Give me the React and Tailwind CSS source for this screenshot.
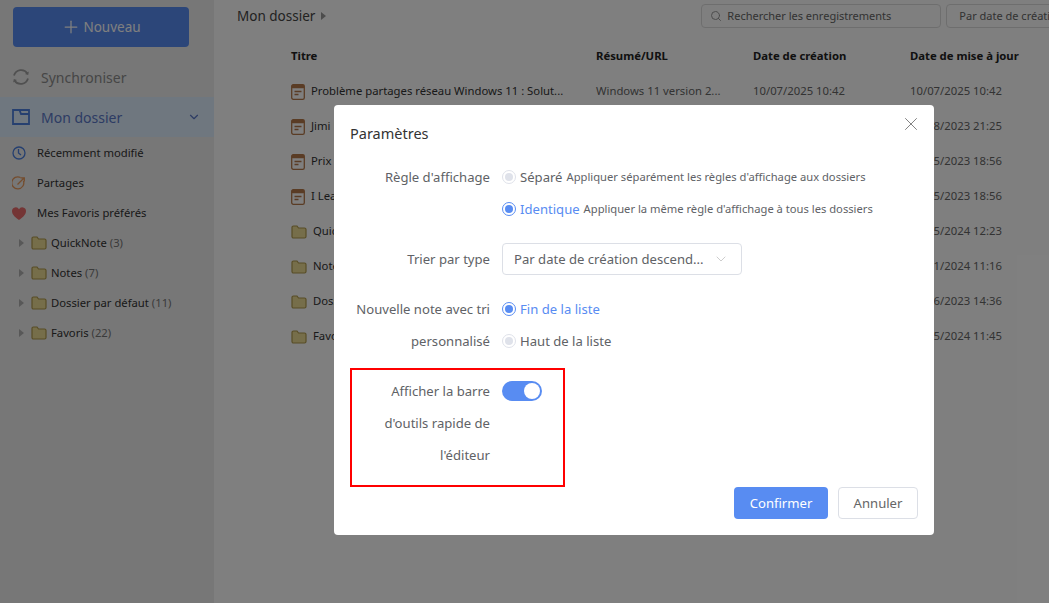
import React from "react";
import { Plus, ChevronDown, Search, X } from "lucide-react";

const rows = [
  { title: "Problème partages réseau Windows 11 : Solut...", summary: "Windows 11 version 2...", created: "10/07/2025 10:42", updated: "10/07/2025 10:42", type: "note" },
  { title: "Jimi Hendrix", summary: "", created: "12/08/2023 21:25", updated: "12/08/2023 21:25", type: "note" },
  { title: "Prix du matériel", summary: "", created: "15/05/2023 18:56", updated: "15/05/2023 18:56", type: "note" },
  { title: "I Learned", summary: "", created: "15/05/2023 18:56", updated: "15/05/2023 18:56", type: "note" },
  { title: "QuickNote", summary: "", created: "15/05/2024 12:23", updated: "15/05/2024 12:23", type: "folder" },
  { title: "Notes", summary: "", created: "11/01/2024 11:16", updated: "11/01/2024 11:16", type: "folder" },
  { title: "Dossier par défaut", summary: "", created: "16/06/2023 14:36", updated: "16/06/2023 14:36", type: "folder" },
  { title: "Favoris", summary: "", created: "15/05/2024 11:45", updated: "15/05/2024 11:45", type: "folder" },
];

const folders = [
  { name: "QuickNote", count: 3 },
  { name: "Notes", count: 7 },
  { name: "Dossier par défaut", count: 11 },
  { name: "Favoris", count: 22 },
];

function FolderIcon() {
  return (
    <svg width="16" height="14" viewBox="0 0 16 14" className="shrink-0">
      <path d="M1 2.500C1 1.600 1.600 1 2.500 1H6l1.500 2h6C14.400 3 15 3.600 15 4.500v7c0 .9-.6 1.500-1.500 1.500h-11C1.600 13 1 12.400 1 11.500Z" fill="#eddc95" stroke="#b09a4c" strokeWidth="1.2" />
    </svg>
  );
}

function NoteIcon() {
  return (
    <svg width="14" height="16" viewBox="0 0 14 16" className="shrink-0">
      <rect x="0.7" y="0.7" width="12.6" height="14.6" rx="1.6" fill="none" stroke="#b5794a" strokeWidth="1.3" />
      <rect x="0.7" y="0.7" width="12.6" height="3.6" rx="1" fill="#b5794a" />
      <path d="M3.500 7.500h7M3.500 10.500h4" stroke="#b5794a" strokeWidth="1.3" />
    </svg>
  );
}

function Caret({ className }) {
  return (
    <svg width="5" height="8" viewBox="0 0 5 8" className={className}>
      <path d="M0 0l5 4-5 4Z" fill="currentColor" />
    </svg>
  );
}

function Radio({ on }) {
  return (
    <span className={`flex h-[14px] w-[14px] shrink-0 items-center justify-center rounded-full border bg-white ${on ? "border-[#588cf2]" : "border-[#dfe2ea]"}`}>
      <span className={`h-2 w-2 rounded-full ${on ? "bg-[#588cf2]" : "bg-[#dfe2ea]"}`} />
    </span>
  );
}

function Sidebar() {
  return (
    <aside className="flex w-[214px] shrink-0 flex-col bg-[#eeeeee]">
      <div className="px-[13px] pt-[7px]">
        <div className="flex h-10 w-[176px] items-center justify-center gap-[2px] rounded bg-[#588cf2] text-[13.5px] text-white">
          <Plus size={20} strokeWidth={1.500} />
          <span className="pt-px">Nouveau</span>
        </div>
      </div>
      <div className="mt-[10px] flex h-10 items-center gap-[10px] pl-[11px] text-[14px] text-[#8c8c8c]">
        <svg width="20" height="20" viewBox="0 0 20 20" fill="none" stroke="#a0a0a0" strokeWidth="1.8">
          <path d="M3 8.500A7.500 7.500 0 0 1 16.500 6.500" />
          <path d="M17 11.500A7.500 7.500 0 0 1 3.500 13.500" />
          <path d="M17.800 4.500l-.6 3.600-3.200-1Z" fill="#a0a0a0" stroke="none" />
          <path d="M2.200 15.500l.6-3.600 3.200 1Z" fill="#a0a0a0" stroke="none" />
        </svg>
        Synchroniser
      </div>
      <div className="flex h-10 items-center bg-[#deeeff] pl-3 pr-[13px] text-[14px] text-[#5a78c8]">
        <svg width="18" height="16" viewBox="0 0 18 16" fill="none" stroke="#4d80e0" strokeWidth="1.800" className="mr-[11px]">
          <path d="M1 1h6.500L9 5h8v10H1ZM7.500 1H17v4" />
        </svg>
        <span className="flex-1">Mon dossier</span>
        <ChevronDown size={14} className="text-[#5a78c8]" />
      </div>
      <div className="mt-px flex h-[30px] items-center gap-[11px] pl-3 text-[11.250px] text-[#333333]">
        <svg width="14" height="14" viewBox="0 0 14 14" fill="none" stroke="#4a7fe0" strokeWidth="1.300">
          <circle cx="7" cy="7" r="6" />
          <path d="M6.500 3v4l2.500 2" />
        </svg>
        Récemment modifié
      </div>
      <div className="flex h-[30px] items-center gap-[11px] pl-3 text-[11.250px] text-[#333333]">
        <svg width="14" height="14" viewBox="0 0 14 14" fill="none" stroke="#e99a5c" strokeWidth="1.300">
          <path d="M11.500 5A6 6 0 1 1 8.500 1.500" />
          <path d="M5.500 8.500L12 2M8.500 1.800H12.300V5.500" />
        </svg>
        Partages
      </div>
      <div className="flex h-[30px] items-center gap-[11px] pl-3 text-[11.250px] text-[#333333]">
        <svg width="14" height="13" viewBox="0 0 14 13">
          <path d="M7 13C2 9.500 0 7 0 4a3.700 3.700 0 0 1 7-1.700A3.700 3.700 0 0 1 14 4c0 3-2 5.500-7 9Z" fill="#e86a6a" />
        </svg>
        Mes Favoris préférés
      </div>
      {folders.map((f) => (
        <div key={f.name} className="flex h-[30px] items-center pl-[19px] text-[11.250px] text-[#333333]">
          <Caret className="mr-[7px] text-[#b0b0b0]" />
          <FolderIcon />
          <span className="ml-[4px]">
            {f.name} <span className="text-[#777777]">({f.count})</span>
          </span>
        </div>
      ))}
    </aside>
  );
}

function Main() {
  return (
    <main className="min-w-0 flex-1 bg-white">
      <div className="flex h-[31px] items-center pl-[23px] pt-[1px]">
        <span className="shrink-0 whitespace-nowrap text-[13.500px] text-[#444444]">Mon dossier</span>
        <Caret className="ml-[6px] shrink-0 text-[#999999]" />
        <div className="ml-[375px] flex h-[24px] w-[240px] shrink-0 items-center gap-[5px] rounded border border-[#dddddd] pl-2 text-[11px] text-[#666666]">
          <Search size={12} className="text-[#999999]" />
          Rechercher les enregistrements
        </div>
        <div className="ml-[5px] flex h-[24px] w-[200px] shrink-0 items-center rounded border border-[#dddddd] pl-3 text-[11px] whitespace-nowrap text-[#666666]">
          Par date de création
        </div>
      </div>
      <div className="pl-[77px] pt-[8px]">
        <div className="grid h-[35px] grid-cols-[305px_157px_157px_120px] items-center text-[11.300px] font-bold text-[#222222]">
          <span>Titre</span>
          <span>Résumé/URL</span>
          <span>Date de création</span>
          <span>Date de mise à jour</span>
        </div>
        {rows.map((r) => (
          <div key={r.title} className="grid h-[35px] grid-cols-[305px_157px_157px_120px] items-center text-[11.300px] text-[#666666]">
            <span className="flex items-center gap-[6px] text-[#333333]">
              {r.type === "note" ? <NoteIcon /> : <FolderIcon />}
              <span className="whitespace-nowrap">{r.title}</span>
            </span>
            <span>{r.summary}</span>
            <span>{r.created}</span>
            <span>{r.updated}</span>
          </div>
        ))}
      </div>
    </main>
  );
}

function SettingsModal() {
  return (
    <div className="absolute left-[334px] top-[105px] flex h-[430px] w-[600px] flex-col rounded bg-white text-[13.100px] text-[#606266]">
      <div className="flex h-[40px] items-end pl-4 text-[14.500px] leading-6 text-[#333333]">Paramètres</div>
      <X size={22} strokeWidth={1} className="absolute right-[12px] top-[8px] text-[#777777]" />

      <div className="mt-4 flex leading-8">
        <div className="ml-4 w-[140px] text-right">Règle d'affichage</div>
        <div className="ml-3">
          <div className="flex h-8 items-center gap-[4px]">
            <Radio />
            <span>Séparé</span>
            <span className="text-[11.200px]">Appliquer séparément les règles d'affichage aux dossiers</span>
          </div>
          <div className="flex h-8 items-center gap-[4px]">
            <Radio on />
            <span className="text-[#588cf2]">Identique</span>
            <span className="text-[11.200px]">Appliquer la même règle d'affichage à tous les dossiers</span>
          </div>
        </div>
      </div>

      <div className="mt-[18px] flex items-center">
        <div className="ml-4 w-[140px] pt-px text-right">Trier par type</div>
        <div className="ml-3 flex h-8 w-[240px] items-center justify-between rounded border border-[#dcdfe6] pl-[11px] pr-3">
          <span className="pt-px">Par date de création descend...</span>
          <ChevronDown size={16} strokeWidth={1.100} className="text-[#bbbbbb]" />
        </div>
      </div>

      <div className="mt-[18px] flex">
        <div className="ml-4 w-[140px] text-right leading-8">Nouvelle note avec tri personnalisé</div>
        <div className="ml-3">
          <div className="flex h-8 items-center gap-[4px]">
            <Radio on />
            <span className="pt-px text-[#588cf2]">Fin de la liste</span>
          </div>
          <div className="flex h-8 items-center gap-[4px]">
            <Radio />
            <span className="pt-px">Haut de la liste</span>
          </div>
        </div>
      </div>

      <div className="mt-[18px] flex">
        <div className="ml-4 w-[140px] text-right leading-8">Afficher la barre d'outils rapide de l'éditeur</div>
        <div className="ml-3 mt-[6px] flex h-5 w-10 items-center justify-end rounded-full bg-[#588cf2] pr-[2px]">
          <span className="h-4 w-4 rounded-full bg-white" />
        </div>
      </div>

      <div className="mt-4 flex justify-end gap-[10px] pr-4">
        <div className="flex h-8 w-[94px] items-center justify-center rounded bg-[#588cf2] pt-px text-white">Confirmer</div>
        <div className="flex h-8 w-[80px] items-center justify-center rounded border border-[#dcdfe6] pt-px text-[#666666]">Annuler</div>
      </div>

      {/* annotation from the screenshot */}
      <div className="absolute left-4 top-[263px] h-[119px] w-[215px] border-2 border-[#ff0000]" />
    </div>
  );
}

export default function App() {
  return (
    <div className="relative flex h-screen w-screen overflow-hidden font-['Noto_Sans',sans-serif]">
      <Sidebar />
      <Main />
      <div className="absolute inset-0 bg-black/50" />
      <SettingsModal />
    </div>
  );
}
